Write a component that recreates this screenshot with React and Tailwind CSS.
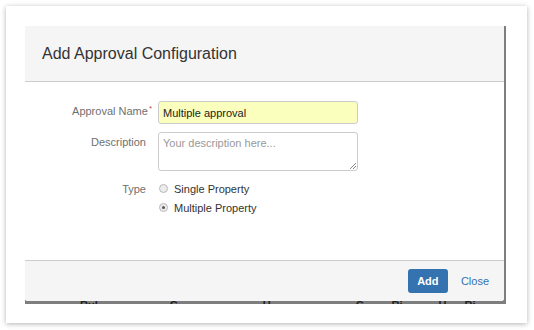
import React from "react";

function Radio({ checked }) {
  return (
    <span className="w-[9px] h-[9px] rounded-full border border-[#b9b9b9] bg-[#ececec] flex items-center justify-center shrink-0">
      {checked && <span className="w-[3px] h-[3px] rounded-full bg-[#555]" />}
    </span>
  );
}

export default function App() {
  return (
    <div
      className="w-[534px] h-[330px] bg-white pt-[6px] pl-[6px]"
      style={{ fontFamily: '"Liberation Sans", Arial, sans-serif' }}
    >
      <div className="w-[521px] h-[317px] bg-white shadow-[0_1px_5px_rgba(0,0,0,0.3)] pt-[20px] pl-[19px]">
        {/* modal over backdrop */}
        <div className="w-[481px] bg-[#7e7e7e] pr-[2px] flex flex-col">
          <div className="w-[479px] flex flex-col bg-white rounded-b-[3px]">
            {/* header */}
            <div className="h-[56px] bg-[#f5f5f5] border-b border-[#cccccc] flex items-center pl-[17px]">
              <h2 className="text-[16px] text-[#333] leading-none font-normal">Add Approval Configuration</h2>
            </div>
            {/* body */}
            <div className="h-[178px] pt-[19px]">
              <div className="grid grid-cols-[121px_200px] gap-x-[12px] gap-y-[8px] text-[11px] leading-[14px]">
                <div className="text-right text-[#707070] pt-[3px]">
                  Approval Name<span className="text-[#d04437] text-[8px] align-top relative -top-[2px] -mr-[6px] ml-[1px]">*</span>
                </div>
                <div className="h-[23px] border border-[#cccccc] rounded-[3px] bg-[#faffbd] flex items-center pl-[4px] text-[#222]">
                  Multiple approval
                </div>

                <div className="text-right text-[#707070] pt-[3px]">Description</div>
                <div className="h-[39px] border border-[#cccccc] rounded-[3px] bg-white pl-[4px] pt-[3px] text-[#999] relative">
                  Your description here...
                  <svg className="absolute right-[1px] bottom-[1px]" width="7" height="7" viewBox="0 0 7 7">
                    <line x1="1" y1="7" x2="7" y2="1" stroke="#888" strokeWidth="1" />
                    <line x1="4" y1="7" x2="7" y2="4" stroke="#888" strokeWidth="1" />
                  </svg>
                </div>

                <div className="text-right text-[#707070] h-[19px] flex items-center justify-end">Type</div>
                <div className="flex flex-col text-[#333]">
                  <div className="h-[19px] flex items-center gap-[6px] pl-[1px]">
                    <Radio />
                    <span>Single Property</span>
                  </div>
                  <div className="h-[19px] flex items-center gap-[6px] pl-[1px]">
                    <Radio checked />
                    <span>Multiple Property</span>
                  </div>
                </div>
              </div>
            </div>
            {/* footer */}
            <div className="h-[41px] bg-[#f5f5f5] border-t border-[#cccccc] rounded-b-[3px] flex items-center justify-end pr-[15px] gap-[13px]">
              <button className="w-[40px] h-[24px] rounded-[3px] bg-[#3572b0] text-white text-[11px] font-bold flex items-center justify-center">
                Add
              </button>
              <a className="text-[11px] text-[#3572b0]">Close</a>
            </div>
          </div>
          {/* backdrop strip with page behind */}
          <div className="h-[3px] overflow-hidden flex text-[11px] leading-[11px] font-bold text-[#222]">
            <span className="ml-[55px] -mt-[1px]">Rul</span>
            <span className="ml-[72px] -mt-[1px]">C</span>
            <span className="ml-[85px] -mt-[1px]">U</span>
            <span className="ml-[85px] -mt-[1px]">C</span>
            <span className="ml-[28px] -mt-[1px]">Ri</span>
            <span className="ml-[36px] -mt-[1px]">U</span>
            <span className="ml-[18px] -mt-[1px]">Ri</span>
          </div>
        </div>
      </div>
    </div>
  );
}
